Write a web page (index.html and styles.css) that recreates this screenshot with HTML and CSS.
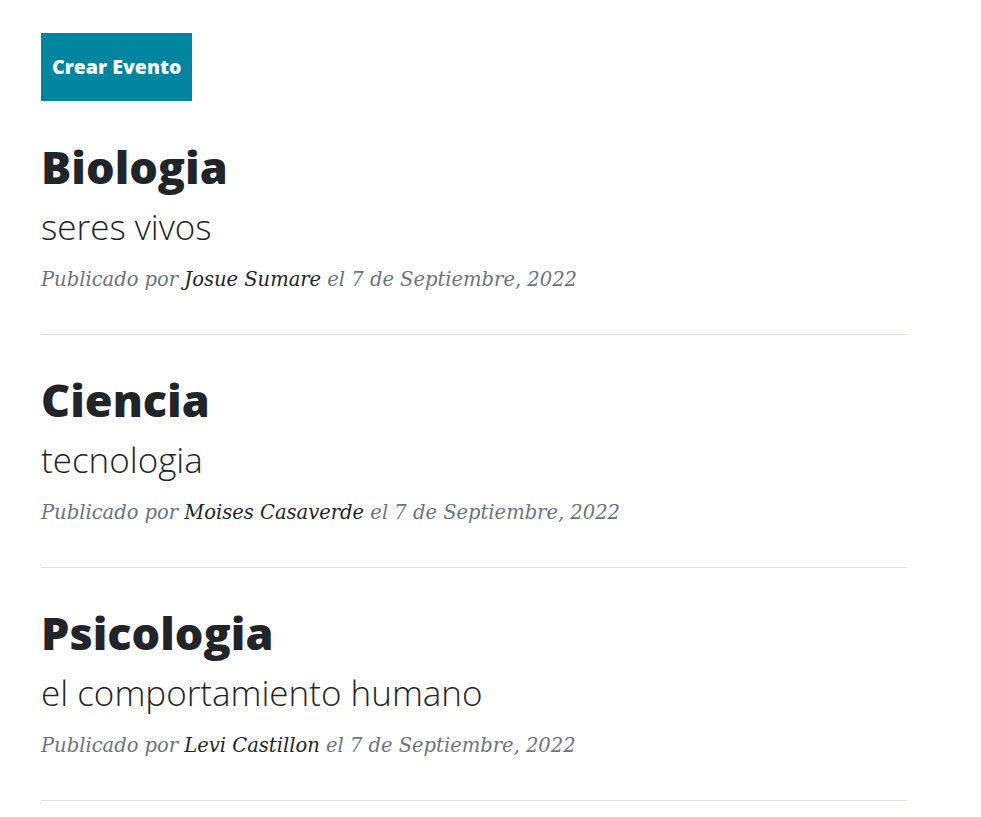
FILE: index.html
```html
<!DOCTYPE html>
<html lang="es">
<head>
<meta charset="utf-8">
<title>Eventos</title>
<link rel="stylesheet" href="styles.css">
</head>
<body>
<main class="container">
  <div class="actions">
    <a class="btn" href="#">Crear Evento</a>
  </div>
  <article class="post">
    <a class="post-link" href="#">
      <h2 class="post-title">Biologia</h2>
      <h3 class="post-subtitle">seres vivos</h3>
    </a>
    <p class="post-meta">Publicado por <a href="#">Josue Sumare</a> el 7 de Septiembre, 2022</p>
  </article>
  <hr class="divider">
  <article class="post">
    <a class="post-link" href="#">
      <h2 class="post-title">Ciencia</h2>
      <h3 class="post-subtitle">tecnologia</h3>
    </a>
    <p class="post-meta">Publicado por <a href="#">Moises Casaverde</a> el 7 de Septiembre, 2022</p>
  </article>
  <hr class="divider">
  <article class="post">
    <a class="post-link" href="#">
      <h2 class="post-title">Psicologia</h2>
      <h3 class="post-subtitle">el comportamiento humano</h3>
    </a>
    <p class="post-meta">Publicado por <a href="#">Levi Castillon</a> el 7 de Septiembre, 2022</p>
  </article>
  <hr class="divider">
</main>
</body>
</html>
```

FILE: styles.css
```css
* { box-sizing: border-box; }
html, body { margin: 0; padding: 0; background: #fff; }
body { font-family: "Open Sans", sans-serif; color: #212529; }
.container { width: 866px; margin-left: 41px; padding-top: 33px; }
.actions { display: flex; margin-bottom: 1px; }
.btn {
  display: block;
  background: #0085a1;
  color: #fff;
  font-weight: 800;
  font-size: 19.5px;
  line-height: 20px;
  padding: 24px 11px;
  text-decoration: none;
}
.post { padding-top: 38px; padding-bottom: 40px; }
.post-link { color: #212529; text-decoration: none; display: block; }
.post-title { font-size: 45px; font-weight: 800; line-height: 54px; margin: 0; }
.post-subtitle { font-size: 35px; font-weight: 300; line-height: 42px; margin: 12px 0 0; }
.post-meta {
  font-family: "DejaVu Serif", serif;
  font-style: italic;
  font-size: 19.5px;
  line-height: 29px;
  color: #6c757d;
  margin: 17px 0 0;
}
.post-meta a { color: #212529; text-decoration: none; }
.divider { border: 0; border-top: 1px solid #dee2e6; margin: 0; }
```
